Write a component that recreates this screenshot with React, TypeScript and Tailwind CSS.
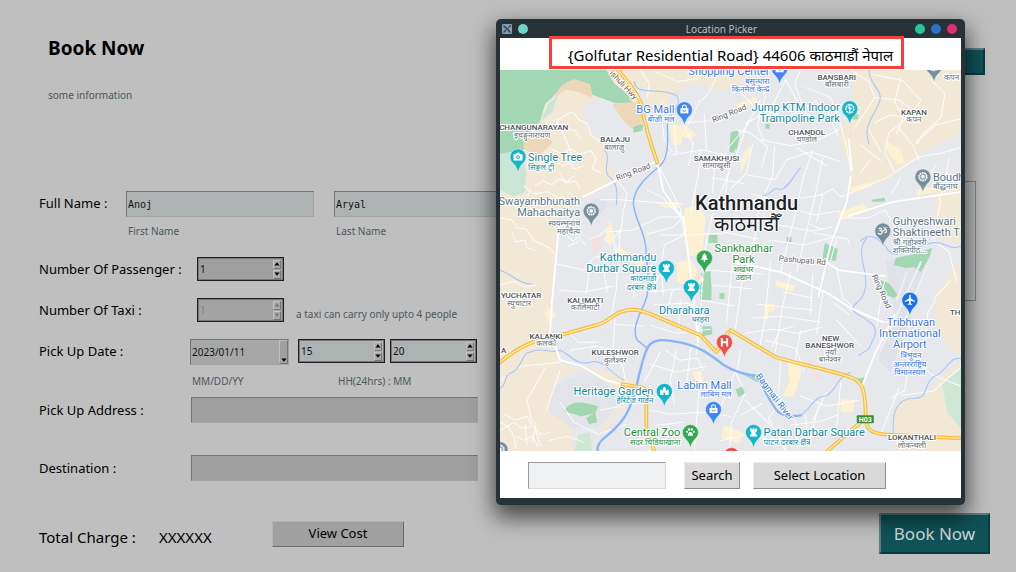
import type { ReactNode } from "react";

const UI = "font-['Noto_Sans','Open_Sans',sans-serif]";

/* ---------- form controls ---------- */

const sunken = "border border-t-[#747676] border-l-[#747676] border-b-[#a3a3a3] border-r-[#a3a3a3] outline-none";

function Arrow({ up = false }: { up?: boolean }) {
  return (
    <svg viewBox="0 0 6 4" className="h-1 w-1.5" fill="currentColor">
      <path d={up ? "M3 0.2 5.6 3.4H0.4Z" : "M3 3.8 0.4 0.6H5.6Z"} />
    </svg>
  );
}

function Spin({ label, value, tone, disabled = false }: { label: string; value: string; tone: string; disabled?: boolean }) {
  const btn =
    "flex h-[9px] w-2 items-center justify-center border border-t-[#c4c4c4] border-l-[#c4c4c4] border-b-[#777] border-r-[#777] bg-[#a9a9a9]";
  return (
    <div className={`flex h-6 w-[87px] items-center border border-[#1d1f20] pr-0.5 pl-px inset-shadow-[0_0_0_1px_#777] ${tone}`}>
      <input
        aria-label={label}
        defaultValue={value}
        disabled={disabled}
        className={`min-w-0 flex-1 bg-transparent pl-px text-[10px] outline-none ${disabled ? "text-[#7f8182]" : "text-[#111]"}`}
      />
      <div className={`flex flex-col gap-px ${disabled ? "text-[#7b7b7b]" : "text-black"}`}>
        <button type="button" aria-label={`${label} up`} disabled={disabled} className={btn}>
          <Arrow up />
        </button>
        <button type="button" aria-label={`${label} down`} disabled={disabled} className={btn}>
          <Arrow />
        </button>
      </div>
    </div>
  );
}

function RowLabel({ htmlFor, className, children }: { htmlFor?: string; className: string; children: ReactNode }) {
  return (
    <label htmlFor={htmlFor} className={`shrink-0 text-[13px] leading-6 whitespace-nowrap text-black ${className}`}>
      {children}
    </label>
  );
}

function BookingForm() {
  const hint = "text-[10px] leading-4 text-[#4b585d]";
  const nameInput = `h-[26px] w-[188px] bg-[#aeb2b2] px-px font-['DejaVu_Sans_Mono',monospace] text-[10px] text-[#111] ${sunken}`;
  return (
    <form className="flex w-[490px] flex-col">
      <div className="flex items-start">
        <RowLabel htmlFor="first" className="w-[87px]">Full Name :</RowLabel>
        <div className="flex gap-5">
          <div className="flex flex-col gap-[6px]">
            <input id="first" defaultValue="Anoj" className={nameInput} />
            <label htmlFor="first" className={`px-0.5 ${hint}`}>First Name</label>
          </div>
          <div className="flex flex-col gap-[6px]">
            <input id="last" defaultValue="Aryal" className={nameInput} />
            <label htmlFor="last" className={`px-0.5 ${hint}`}>Last Name</label>
          </div>
        </div>
      </div>
      <div className="mt-[18px] flex items-center">
        <RowLabel className="w-[158px]">Number Of Passenger :</RowLabel>
        <Spin label="Number Of Passenger" value="1" tone="bg-[#9f9f9f]" />
      </div>
      <div className="mt-[17px] flex items-center">
        <RowLabel className="w-[158px]">Number Of Taxi :</RowLabel>
        <Spin label="Number Of Taxi" value="1" tone="bg-[#a3a3a3]" disabled />
        <span className={`pt-2 pl-3 ${hint}`}>a taxi can carry only upto 4 people</span>
      </div>
      <div className="mt-[17px] flex items-start">
        <RowLabel htmlFor="date" className="w-[151px]">Pick Up Date :</RowLabel>
        <div className="flex flex-col gap-2">
          <div className={`relative flex h-[26px] w-[99px] bg-[#a6a8a8] ${sunken}`}>
            <select id="date" className="w-full appearance-none pl-px text-[10px] text-[#111] outline-none">
              <option>2023/01/11</option>
            </select>
            <span className="pointer-events-none absolute inset-y-0 right-0 flex w-[9px] items-end justify-center border border-t-[#bdbdbd] border-l-[#bdbdbd] border-r-[#777] border-b-[#777] bg-[#a0a0a0] pb-px">
              <Arrow />
            </span>
          </div>
          <span className={`px-0.5 ${hint}`}>MM/DD/YY</span>
        </div>
        <div className="flex flex-col gap-[10px] pl-[9px]">
          <div className="flex gap-[5px]">
            <Spin label="Hours" value="15" tone="bg-[#aeb2b2]" />
            <Spin label="Minutes" value="20" tone="bg-[#aeb2b2]" />
          </div>
          <span className={`pl-10 ${hint}`}>HH(24hrs) : MM</span>
        </div>
      </div>
      <div className="mt-2 flex items-center">
        <RowLabel htmlFor="pickup" className="w-[152px]">Pick Up Address :</RowLabel>
        <input id="pickup" className={`h-[26px] w-[287px] bg-[#9f9f9f] px-1 text-[10px] ${sunken}`} />
      </div>
      <div className="mt-8 flex items-center">
        <RowLabel htmlFor="destination" className="w-[152px]">Destination :</RowLabel>
        <input id="destination" className={`h-[26px] w-[287px] bg-[#9f9f9f] px-1 text-[10px] ${sunken}`} />
      </div>
    </form>
  );
}

/* ---------- map ---------- */

type Icon = "bag" | "star" | "camera" | "temple" | "fort" | "tree" | "plane" | "paw" | "h" | "om" | "wheel";

function Glyph({ icon }: { icon: Icon }) {
  switch (icon) {
    case "bag":
      return (
        <>
          <path d="M-4-1.5h8v5.200h-8z" fill="#fff" />
          <path d="M-1.9-1.5v-1.200a1.9 1.9 0 0 1 3.8 0v1.200" fill="none" stroke="#fff" strokeWidth="1.100" />
          <path d="M-1.500 .3a1.500 1.500 0 0 0 3 0" fill="none" stroke="#4285f4" strokeWidth=".9" />
        </>
      );
    case "camera":
      return (
        <>
          <path d="M-4.500-2.600h2.300l.8-1.300h2.800l.8 1.300h2.300v6.200h-9z" fill="#fff" />
          <circle cy="0.4" r="1.8" fill="#12b5cb" />
          <circle cy="0.4" r=".8" fill="#fff" />
        </>
      );
    case "temple":
      return (
        <>
          <path d="M-4.300 3.800v-5.400h1.600v1h1v-2.200h.9V-4.600h1.600v1.400h.9V-.6h1v-1h1.600v5.400z" fill="#fff" />
          <path d="M-.9 3.800V1.400h1.800v2.400z" fill="#12b5cb" />
        </>
      );
    case "fort":
      return <path d="M-3.4-4h1.5v1.200h1.1V-4H.8v1.200h1.1V-4h1.5v2.800L2-.2l.4 2.400h1.200v1.800h-7.200V2.200h1.200L-2-.2l-1.400-1z" fill="#fff" />;
    case "tree":
      return <path d="M0-5 2.700-1.400H1.600L3.500 1.800H.7v2.200H-.7V1.800h-2.800L-1.600-1.400h-1.100z" fill="#fff" />;
    case "plane":
      return <path d="M0-5.200c.6 0 .8.7.8 1.200v2.200L5 .8v1.100L.8.700v2.400l1.300 1v.8L0 4.300l-2.100.6v-.8l1.300-1V.7L-5 1.900V.8l4.200-2.600V-4c0-.5.2-1.200.8-1.200z" fill="#fff" />;
    case "paw":
      return (
        <g fill="#fff">
          <path d="M0-.4c1.600 0 3 2 2.600 3.200C2.200 4 .8 3.200 0 3.200S-2.200 4-2.600 2.800C-3 1.600-1.600-.4 0-.4z" />
          <circle cx="-3.500" cy="-.6" r="1.100" />
          <circle cx="3.500" cy="-.6" r="1.100" />
          <circle cx="-1.400" cy="-2.900" r="1.200" />
          <circle cx="1.400" cy="-2.900" r="1.200" />
        </g>
      );
    case "h":
      return <path d="M-2.700-4.200v8.400M2.700-4.200v8.400M-2.700 0h5.400" stroke="#fff" strokeWidth="1.900" />;
    case "om":
      return <path d="M-4-2.200c2-1.800 4 .6 1.400 1.900 3.200.2 2.200 3.700-.4 3.500-.9 0-1.500-.5-1.700-1.200M-.6 0c1.600.8 1.700-1.800 3.300-1.300 1.700.5 1.200 3.400-1 2.800M.5-3.500c.9 1.100 2.300 1.100 3.100 0" fill="none" stroke="#fff" strokeWidth="1.100" />;
    case "star":
      return (
        <g fill="none" stroke="#fff">
          <circle r="4" strokeWidth="1.600" strokeDasharray="2.100 .6" />
          <path d="M0-3V4.500M0 0-2-1.800M0 1.200l2-2" strokeWidth="1.100" />
        </g>
      );
    default:
      return (
        <g fill="none" stroke="#fff">
          <circle r="3.900" strokeWidth="1.600" strokeDasharray="1.800 .6" />
          <circle r="1.200" strokeWidth="1" />
          <path d="M0-3.400V3.400M-3.400 0h6.800M-2.400-2.400l4.800 4.800M2.400-2.400l-4.800 4.800" strokeWidth=".5" />
        </g>
      );
  }
}

const pins: [number, number, string, Icon][] = [
  [779, 69, "#4285f4", "bag"],
  [684, 110, "#4285f4", "bag"],
  [849, 109, "#12b5cb", "star"],
  [933, 67, "#78909c", "wheel"],
  [518, 157, "#12b5cb", "camera"],
  [591, 211, "#78909c", "wheel"],
  [922, 177, "#78909c", "wheel"],
  [882, 231, "#78909c", "om"],
  [704, 258, "#34a853", "tree"],
  [666, 268, "#12b5cb", "fort"],
  [691, 287, "#12b5cb", "fort"],
  [909, 300, "#1a73e8", "plane"],
  [724, 342, "#ea5045", "h"],
  [664, 391, "#12b5cb", "temple"],
  [713, 409, "#4285f4", "bag"],
  [690, 432, "#34a853", "paw"],
  [753, 432, "#12b5cb", "fort"],
  [731, 455, "#ea5045", "h"],
  [500, 449, "#78909c", "wheel"],
];

type Anchor = "start" | "middle" | "end";
type Label = [string, number, number, Anchor];

const teal: Label[] = [
  ["Jump KTM Indoor", 839, 111, "end"],
  ["Trampoline Park", 839, 122, "end"],
  ["Single Tree", 528, 161, "start"],
  ["Kathmandu", 656, 261, "end"],
  ["Durbar Square", 656, 272, "end"],
  ["Dharahara", 709, 314, "end"],
  ["Heritage Garden", 653, 395, "end"],
  ["Patan Darbar Square", 763, 436, "start"],
];
const tealSmall: Label[] = [
  ["सिङ्गल ट्री", 528, 170, "start"],
  ["काठमाडौं", 656, 281, "end"],
  ["दरबार क्षेत्र", 656, 290, "end"],
  ["धरहरा", 709, 322, "end"],
  ["हेरिटेज गार्डेन", 653, 403, "end"],
  ["पाटन दरबार क्षेत्र", 763, 445, "start"],
];
const blue: Label[] = [
  ["Shopping Center", 769, 75, "end"],
  ["BG Mall", 674, 113, "end"],
  ["Tribhuvan", 910, 326, "middle"],
  ["International", 909, 337, "middle"],
  ["Airport", 909, 348, "middle"],
  ["Labim Mall", 731, 389, "end"],
];
const blueSmall: Label[] = [
  ["बसुन्धारा", 769, 84, "end"],
  ["किनमेल केन्द्र", 769, 92, "end"],
  ["बीजी मल", 674, 122, "end"],
  ["त्रिभुवन", 910, 358, "middle"],
  ["अन्तरराष्ट्रिय", 909, 367, "middle"],
  ["विमानस्थल", 909, 375, "middle"],
  ["लाबिम मल", 731, 397, "end"],
];
const slate: Label[] = [
  ["Swayambhunath", 580, 205, "end"],
  ["Mahachaitya", 580, 216, "end"],
  ["Boudh", 932, 181, "start"],
  ["Guhyeshwari", 892, 225, "start"],
  ["Shaktineeth T", 892, 236, "start"],
];
const slateSmall: Label[] = [
  ["स्वयम्भूनाथ", 580, 226, "end"],
  ["महाचैत्य", 580, 234, "end"],
  ["बौद्धनाथ", 932, 189, "start"],
  ["श्री गुह्येश्वरी", 892, 245, "start"],
  ["शक्तिपीठ...", 892, 253, "start"],
  ["कपन", 943, 80, "start"],
];
const green: Label[] = [
  ["Sankhadhar", 743, 252, "middle"],
  ["Park", 743, 263, "middle"],
  ["Central Zoo", 680, 436, "end"],
];
const greenSmall: Label[] = [
  ["शंखधर", 743, 272, "middle"],
  ["उद्यान", 743, 280, "middle"],
  ["सदर चिडियाखाना", 680, 445, "end"],
];
const places: Label[] = [
  ["CHANGUNARAYAN", 568, 130, "end"],
  ["BALAJU", 615, 142, "middle"],
  ["BANSBARI", 836, 80, "middle"],
  ["KAPAN", 913, 115, "middle"],
  ["CHANDOL", 806, 135, "middle"],
  ["SAMAKHUSI", 716, 161, "middle"],
  ["YUCHATAR", 501, 298, "start"],
  ["KALIMATI", 585, 303, "middle"],
  ["KALANKI", 546, 339, "middle"],
  ["KULESHWOR", 615, 355, "middle"],
  ["NEW", 830, 341, "middle"],
  ["BANESHWOR", 829, 348, "middle"],
  ["LOKANTHALI", 911, 440, "middle"],
  ["TH.", 949, 315, "start"],
  ["A", 501, 353, "start"],
  ["DANDA", 549, 457, "middle"],
];
const placesSmall: Label[] = [
  ["इचङ्गुनारायण", 532, 138, "middle"],
  ["बालाजु", 614, 150, "middle"],
  ["बाँसबारी", 836, 87, "middle"],
  ["कपन", 913, 122, "middle"],
  ["चण्डोल", 806, 142, "middle"],
  ["सामाखुसी", 716, 168, "middle"],
  ["स्युचाटार", 519, 306, "middle"],
  ["कालिमाटी", 585, 310, "middle"],
  ["कलंकी", 546, 346, "middle"],
  ["कुलेश्वर", 615, 363, "middle"],
  ["नयाँ", 830, 355, "middle"],
  ["बानेश्वर", 829, 362, "middle"],
  ["लोकन्थली", 911, 448, "middle"],
];

function Labels({ items, className }: { items: Label[]; className: string }) {
  return (
    <g className={className}>
      {items.map(([text, x, y, anchor]) => (
        <text key={`${x}-${y}`} x={x} y={y} textAnchor={anchor}>
          {text}
        </text>
      ))}
    </g>
  );
}

const greenAreas = [
  "M730 133l7-3 2 8-4 16-6-2z",
  "M708 235h9v8h-9z",
  "M700 273l10-2 1 22-10 3z",
  "M699 285h12v15h-11z",
  "M702 326h9l1 8-10 2z",
  "M719 293h5v6h-5z",
  "M824 243l13 6-2 12-13-2z",
  "M786 237h5v5h-5z",
  "M871 200l13-2v4h-13z",
  "M895 258l15-3 21-7-2 8-9 16-7-5-8 1-12-3z",
  "M880 280l8 3 9 12-4 3-12-5z",
  "M564 411c4-8 12-10 22-8l12 3-3 7-14 3z",
  "M586 418l9-6 2 10-8 2z",
  "M735 389l8-3 3 6-8 5z",
  "M857 378l8-1-4 9z",
  "M740 373l20 1 5 11-12-5z",
  "M765 124h4v5h-4z",
  "M852 113l6 2-1 5-7-1z",
  "M633 127l10-3-1 7-9 2z",
];

const yellowAreas = [
  "M684 208l15-2 6 12-3 36-12 2-6-14z",
  "M676 262l14-2 14 20-10 8-17-6z",
  "M668 125h16l12 10-6 4-8-2-1 8h-9z",
  "M656 203l20-1 3 6-14 0z",
  "M604 240l6-20 4 16 -4 10z",
  "M616 246l28 16-3 4-26-8z",
  "M848 188l22-6 1 4-20 8z",
  "M838 212l24-8 8 6-30 10z",
  "M787 362l14 2-1 12-7 20-10 0 6-16z",
  "M660 100l8 6-2 8-6-2z",
  "M735 105l20-8 2 4-18 8z",
  "M884 140l16 10 4 14-8 0-10-14z",
  "M740 160l9-14 3 3-12 26z",
  "M915 190l22-4 8 4-28 6z",
  "M775 280l20 6-4 6-16-6z",
  "M692 372l8-2 4 14-8 0z",
  "M840 398l14 2-2 12-12 0z",
  "M764 304l10 0 0 6-6 2-2 12z",
  "M900 340l10 4-3 14-9-3z",
  "M724 425l20 8-6 10-18-6z",
  "M544 314l6-6 6 8-8 6z",
];

const minorRoads = [
  "M500 205l10-4 6 6 12-3 5 8 10 1 4 7 9 2 3 6",
  "M500 218l12 2 5 8 9 1 8 12 14 6 6 6",
  "M512 232l4 10 9-2 2 8 8 2",
  "M535 186l8-5 9 4 6-6 9 3 7-6",
  "M548 165l8-4 6 5 8-3 4 6 9-2",
  "M552 150l10 4 8-5 9 5 12-3",
  "M554 134l4-14 14-8 7 8 8 4 4 12 10 6",
  "M556 120l10 20 6 16 10 4M565 128l10 3 5 8",
  "M560 175l6 8 9-2 5 8M590 150l6 9-4 10 9 4",
  "M530 190l-3 8 5 4M556 200l7-4 3 6M524 186l10 8 14-2 10 6",
  "M565 235l8 6 6-4 6 8M568 246l10-4",
  "M640 70l9 14-2 14M655 72l22 10 20-3 8-10",
  "M700 100l-15 30 8 14M720 70l-12 24-6 6",
  "M684 123l28-2 24-12M704 115l2 34",
  "M657 163l10 20 13 26 3 25",
  "M617 180l10 14-4 18-2 17-8 10 4 20",
  "M605 232l28-2 26-13 24 0",
  "M600 200l20 0 26 2 36 2",
  "M607 228l-8 8-10 3M615 255l-20 2-10 10",
  "M647 190l16 8 16 18M670 152l-14 14",
  "M683 217l-10 10-26 7",
  "M684 235l-20 10-3 20 2 30",
  "M660 110l4 30 8 12M674 125l2 30M672 155l30-5 26 6",
  "M693 144l-5 22M700 150l-2 24-8 40",
  "M714 165l-2 30M728 172l-4 28M712 178l32 6",
  "M735 150l-8 26-15 38-8 38-4 60-4 42",
  "M748 120l-12 35M760 100l-13 25-20 24",
  "M735 88l20 20 32 10 16-10",
  "M755 72l10 24-8 30 6 14",
  "M785 80l-15 30-25 14M785 80l15 28 12 12",
  "M800 70l-6 14 8 22",
  "M803 108l12-6 12 10 10 24",
  "M760 140l30 6 24-4 24-12",
  "M752 145l-6 28-16 16",
  "M746 175l28 5 12-20 24-8 30 10",
  "M774 146l-2 30-12 28-6 20",
  "M752 195l30 6 40-6",
  "M812 150l-10 30-6 28-16 64",
  "M822 158l-8 40-18 74M796 148l30 18",
  "M735 130l14 3 18 14-6 20",
  "M783 205l30 10 26-4M777 225l34 6 20-4",
  "M768 240l36 5 28-8",
  "M757 228l-15 50-7 50",
  "M719 231l38 8M702 270l32 2 28 2M712 285l40 4M700 300l34 6",
  "M732 262l-6 60M770 262l-6 60-6 30M790 272l-8 34-8 50",
  "M783 292l28 6M756 304l56 6M752 318l28-2 40 6",
  "M745 333l28-4 24 4 24-6",
  "M812 274l-2 40M822 292l-6 42M833 303l16 12",
  "M660 235l30 0 36-2M668 262l-16 26",
  "M650 292l26-3 26 2M653 305l34-2 16 6",
  "M672 290l-6 25M680 300l-2 30M650 325l26 8 34-4",
  "M557 264l26 6 20-4 18 6 30-4",
  "M620 230l-4 60-6 32M560 290l24 2 30-6",
  "M590 265l-4 28M603 268l4 24M636 268l-3 30",
  "M615 312l-2 36 10 20 3 18M613 324l30 2",
  "M566 330l12 12 20 0M570 350l26-4 18 4",
  "M500 285l14-4 10 6 12-2",
  "M500 380l20-14 22-2 18-2",
  "M545 368l-18 32 4 18 10 28M560 370l-14 40",
  "M500 430l14-8 8 6 12-2 6 8 10-2",
  "M505 414l10 6 12-4 4 8M516 436l8 4 8-4 6 10",
  "M500 422l8 4 6 10 2 12M525 424l2 20M536 422l-4 20",
  "M560 402l14 20 24 12 28-10",
  "M548 440l20-4 16 6M600 410l20-4",
  "M660 352l-16 30M665 350l14 10 18-2 6 12",
  "M650 364l26 8 30-6M676 350l-6 30 4 24M690 348l-4 40",
  "M650 410l20 4 30-2 30 4M655 425l28-3",
  "M700 372l-4 50-2 29M735 370l-16 40",
  "M735 372l10 20-14 30-2 29M720 440l30-6 20 6",
  "M740 415l22-12M745 400l30 30 10 21",
  "M780 400l-12 18 18 32M790 425l30-4 16-6",
  "M795 420l2 28M805 415l2 30M818 405l-8 32",
  "M800 396l26 10 32-6M826 392l-14 28M840 382l-4 44",
  "M780 362l-2 28M771 348l8-18 14-4M800 330l-6 34",
  "M740 350l-4 24M765 340l30 8 8 22",
  "M805 88l25 10 8 20 8 30 4 24",
  "M850 70l18 12 6 16-12 18-10 14",
  "M872 75l30 6 18 20-12 16-20 16-4 20 10 20",
  "M874 98l24 2 16 12M900 78l-6 24 8 16-6 16",
  "M930 80l14 14-4 24-18 16-6 10",
  "M915 143l20-18 25-6M912 120l-22-5-16 8",
  "M898 128l14 18 6 14M860 145l20 16M868 130l12 22",
  "M820 195l12-6 8 8 14-6 30-12 34-22 24-4 20-6",
  "M838 218l30 0 16-8 6 10M860 172l10-12",
  "M900 178l-10 16M935 165l-12 20M948 158l-4 26-6 16",
  "M940 200l-8 40 16 12 8 30",
  "M810 224l12 6M822 196l-6 26",
  "M813 233l34 6 2 6M836 238l-6 22",
  "M836 268l6 30 12 10M850 310l32 12 22 0",
  "M884 280l-4 20-4 26",
  "M898 388l-12 30-6 16M896 340l34 34 30 12",
  "M912 330l-8 60-14 8M935 300l-8 12-4 38",
  "M950 280l-18 20M836 320l24 26",
  "M900 395l32-4 28-24",
];

const arterials = [
  "M583 197l36-18 38-18M657 163l6 28 18 26M683 217l10 80 5 45",
  "M552 300l-2 32 10 28 22 6 24 14 16 4M558 235l-6 66",
  "M850 177l-4 25-16 42-12 52",
  "M848 140l3 30",
  "M735 262l45 10 45 20 25 16 32 14",
  "M818 258l20 12 46 6",
  "M848 216l44-14 68-10",
  "M862 384l12-30 20-40",
];

const highways = [
  "M612 64C628 82 636 92 641 104C644 122 648 138 657 163",
  "M500 362C522 344 535 340 560 335L596 325C608 322 612 315 620 312S636 308 650 314L700 335L716 352L728 332",
  "M730 330L775 357C800 364 830 370 850 377C862 381 865 390 865 420C866 430 872 433 884 434L960 438",
  "M622 384L641 387Q646 388 646 393V430L655 453",
  "M824 453L862 420",
];

const rivers = [
  { d: "M667 125C668 148 667 158 660 166C642 180 634 190 633 203C634 220 646 232 646 255C648 280 650 290 644 304C636 320 632 332 637 340L647 348", w: 1.4 },
  { d: "M647 348C640 362 639 380 632 400C626 418 618 426 606 436C598 442 597 446 597 453", w: 2.4 },
  { d: "M647 348C652 338 664 339 678 342C700 346 712 356 722 364C734 372 746 374 756 376C764 388 770 404 778 412C784 416 792 416 800 415", w: 2.4 },
];
const streams = [
  "M800 415C812 406 814 396 824 396C836 392 834 378 850 372",
  "M860 241C868 232 878 238 886 248C893 262 910 248 930 243C944 240 948 252 960 246",
  "M866 238C854 252 866 266 865 285C862 306 852 300 852 310C862 320 880 322 873 338C866 352 872 346 858 355",
  "M500 388C508 384 502 376 512 372S522 352 530 352C542 346 548 354 560 350C570 354 576 366 590 362S610 374 624 380",
  "M634 82C636 98 660 86 676 96C684 106 668 112 667 125",
  "M800 168C792 176 790 186 780 190C770 186 774 194 762 196",
  "M500 270C514 276 520 284 532 284",
  "M893 440C890 410 896 398 914 398C930 398 920 380 938 374C952 360 950 358 960 358",
  "M868 70C868 86 884 90 878 104S862 126 868 144",
  "M604 150C612 158 602 168 608 176C616 182 618 190 616 205",
];

function CityMap() {
  const poi = "text-[11px]";
  const small = "font-['Noto_Sans',sans-serif] text-[8px]";
  return (
    <svg
      role="img"
      aria-label="Map of Kathmandu"
      viewBox="500 70 460 381"
      preserveAspectRatio="xMidYMid slice"
      className="block h-[381px] w-full bg-[#e8eaed] font-['Roboto',sans-serif]"
    >
      <rect x="500" y="70" width="460" height="381" fill="#e6e8ec" />
      <g fill="#f1e8d6">
        <path d="M500 70H640V104L632 130 612 98 600 97 581 108 588 130 603 144 608 160 616 179 583 197 564 215 557 240 551 300 552 340 560 362 582 370 566 374 552 386 549 412 570 424 573 451H500Z" />
        <path d="M636 70H748L738 84 722 92 690 84 668 98 664 112 648 104Z" />
        <path d="M848 70H960V133L918 154 903 166 885 181 846 194 849 168 838 140 845 118 852 100Z" />
        <path d="M932 192L960 186V245L940 240Z" />
        <path d="M936 292L950 272 960 262V356L945 345 933 320Z" />
        <path d="M893 451V410L902 398 925 396 940 376 960 360V451Z" />
        <path d="M582 366L612 372 636 382 630 402 610 424 598 438 600 430 620 404 622 394 600 378Z" />
      </g>
      <g fill="#dfe2e9">
        <path d="M552 388L570 378 590 372 618 392 616 406 600 426 572 428 550 412Z" opacity=".7" />
        <path d="M885 262L918 250 925 268 905 330 890 372 878 360 893 310Z" />
        <path d="M594 200l10-2 4 8-8 8-8-4z" />
      </g>
      <g fill="#a3d7b4">
        <path d="M500 70H606L614 84 632 98 631 104 614 103 592 95 590 85 575 80 562 86 552 98 545 104 540 122 530 130 524 150 500 155Z" />
      </g>
      <path d="M548 104L558 96 552 112 541 122Z" fill="#c9e6d4" />
      <path d="M500 154L522 150 526 172 525 192 514 197 500 190Z" fill="#c9e6d4" />
      <path d="M554 98C560 86 568 80 576 80L590 85 592 98 578 92 566 90Z" fill="#ecd8b8" />
      <path d="M525 136L548 126 552 144 538 157 523 148Z" fill="#ecd8b8" />
      <path d="M612 104L638 102 643 122 633 130 622 120Z" fill="#ecd8b8" />
      <path d="M941 382L960 368V428L946 412Z" fill="#cfe8d6" />
      <path d="M578 434L590 432 592 451H574Z" fill="#cfe8d6" />
      <g fill="#a3d7b4">
        {greenAreas.map((d) => (
          <path key={d} d={d} />
        ))}
      </g>
      <g fill="#fcf1d0">
        {yellowAreas.map((d) => (
          <path key={d} d={d} />
        ))}
      </g>
      <g fill="#f5dedd">
        <path d="M591 235h9l1 14-8 4z" />
        <path d="M738 142l6-3 2 5-5 3z" />
        <path d="M813 372l8 2-2 5-6-2z" />
        <path d="M697 270l4 3-3 8-4-2z" />
      </g>
      <g fill="none" strokeLinejoin="round" strokeLinecap="round">
        <g stroke="#fff" strokeWidth="1" opacity=".9">
          {minorRoads.map((d) => (
            <path key={d} d={d} />
          ))}
        </g>
        <g stroke="#a4c4f7" strokeWidth="1">
          {streams.map((d) => (
            <path key={d} d={d} />
          ))}
        </g>
        <g stroke="#8ab4f8">
          {rivers.map(({ d, w }) => (
            <path key={d} d={d} strokeWidth={w} />
          ))}
        </g>
        <g stroke="#fff" strokeWidth="1.800">
          {arterials.map((d) => (
            <path key={d} d={d} />
          ))}
        </g>
        <g stroke="#f8bd3a" strokeWidth="3.800">
          {highways.map((d) => (
            <path key={d} d={d} />
          ))}
        </g>
        <g stroke="#fdeab0" strokeWidth="1.400">
          {highways.map((d) => (
            <path key={d} d={d} />
          ))}
        </g>
        <g stroke="#eef0f4" strokeWidth="2">
          <path d="M920 262L880 350M906 272L896 300M926 266L904 320" />
        </g>
      </g>
      <rect x="856" y="415" width="17" height="8" rx="1" fill="#3c8a2e" />
      <text x="864.5" y="422" textAnchor="middle" className="fill-white text-[7px] font-bold">
        H03
      </text>
      {pins.map(([x, y, color, icon]) => (
        <g key={`${x}-${y}`} transform={`translate(${x} ${y})`}>
          <path d="M0 15.500C-1 11-2.500 9-4.800 6.600A8 8 0 1 1 4.800 6.600C2.500 9 1 11 0 15.500Z" fill={color} stroke="#fff" strokeWidth=".4" />
          <Glyph icon={icon} />
        </g>
      ))}
      <g stroke="#fff" strokeWidth="2" strokeLinejoin="round" className="[paint-order:stroke]">
        <g className="fill-[#5f6368] text-[8px]">
          <text transform="translate(713 123) rotate(-22)">Ring Road</text>
          <text transform="translate(617 181) rotate(-21)">Ring Road</text>
          <text transform="translate(778 261) rotate(5)">Pashupati Rd</text>
          <text transform="translate(871 276) rotate(66)">Ring Road</text>
        </g>
        <text transform="translate(609 74) rotate(47)" className="fill-[#7a5a3a] text-[8px]">
          ishuli Hwy
        </text>
        <text transform="translate(755 376) rotate(53)" className="fill-[#2f74d0] text-[9px]">
          Bagmati River
        </text>
        <Labels items={places} className="fill-[#4d5156] text-[8px] font-medium" />
        <Labels items={placesSmall} className="fill-[#6b6f74] font-['Noto_Sans',sans-serif] text-[8px]" />
        <Labels items={teal} className={`fill-[#12899a] ${poi}`} />
        <Labels items={tealSmall} className={`fill-[#12899a] ${small}`} />
        <Labels items={blue} className={`fill-[#3b78e7] ${poi}`} />
        <Labels items={blueSmall} className={`fill-[#3b78e7] ${small}`} />
        <Labels items={slate} className={`fill-[#5b7685] ${poi}`} />
        <Labels items={slateSmall} className={`fill-[#5b7685] ${small}`} />
        <Labels items={green} className={`fill-[#1e8e3e] ${poi}`} />
        <Labels items={greenSmall} className={`fill-[#1e8e3e] ${small}`} />
        <text x="746" y="210" textAnchor="middle" className="fill-[#202124] text-[20px] font-medium">
          Kathmandu
        </text>
        <text x="746" y="231" textAnchor="middle" className="fill-[#202124] font-['Noto_Sans',sans-serif] text-[20px]">
          काठमाडौँ
        </text>
      </g>
    </svg>
  );
}

/* ---------- location picker window ---------- */

const raised = "border border-t-[#ececec] border-l-[#ececec] border-b-[#8d8d8d] border-r-[#8d8d8d] bg-[#d9d9d9]";

function LocationPicker() {
  return (
    <section
      role="dialog"
      aria-labelledby="picker-title"
      className="absolute top-[19px] right-[51px] flex w-[469px] flex-col rounded-[5px] bg-[#263238] px-1 pb-[7px] shadow-[0_10px_22px_2px_rgba(0,0,0,0.65)]"
    >
      <header className="flex h-[19px] items-center px-0.5">
        <svg viewBox="0 0 10 10" className="size-2.5">
          <rect width="10" height="10" rx="1" fill="#7f9dbb" />
          <path d="M1.500 1.500 8.500 8.500M8.500 1.500 6 4.500M4 6 1.500 8.500" stroke="#2c3a46" strokeWidth="1.300" />
          <circle cx="7.500" cy="4" r="1" fill="#c98a6a" />
        </svg>
        <span className="ml-1.5 size-2.5 rounded-full bg-[#6ed6c8]" />
        <h2 id="picker-title" className="flex-1 text-center text-[10px] leading-4 text-[#b4bfc4]">
          Location Picker
        </h2>
        <div className="flex gap-1.5 pr-0.5">
          <button type="button" aria-label="Minimize" className="size-2.5 rounded-full bg-[#2bc39b]" />
          <button type="button" aria-label="Maximize" className="size-2.5 rounded-full bg-[#2f6fc4]" />
          <button type="button" aria-label="Close" className="size-2.5 rounded-full bg-[#e12d74]" />
        </div>
      </header>
      <div className="bg-white">
        <p className="relative flex h-8 items-center justify-center pt-0.5 text-[15px] whitespace-nowrap text-black">
          {"{Golfutar Residential Road} 44606 काठमाडौं नेपाल"}
          <span className="pointer-events-none absolute -top-0.5 left-[49px] h-[33px] w-[355px] border-[3px] border-[#f8403a]" />
        </p>
        <CityMap />
        <form className="flex items-center pt-[11px] pb-[9px] pl-7">
          <input aria-label="Search location" className="h-[27px] w-[138px] border border-t-[#9a9a9a] border-l-[#9a9a9a] border-b-[#dcdcdc] border-r-[#dcdcdc] bg-[#eff0f2] px-1 text-[12px] outline-none" />
          <button type="button" className={`ml-[18px] h-[27px] w-14 text-[13px] text-black ${raised}`}>
            Search
          </button>
          <button type="button" className={`ml-[13px] h-[27px] w-[133px] text-[13px] text-black ${raised}`}>
            Select Location
          </button>
        </form>
      </div>
    </section>
  );
}

export default function App() {
  const tealButton = "border-2 border-t-[#5b7f82] border-l-[#5b7f82] border-r-[#0b3a3d] border-b-[#0b3a3d] bg-[#0f5257] text-[#cfd6d6]";
  return (
    <main className={`relative flex min-h-screen flex-col overflow-hidden bg-[#bfbfbf] ${UI}`}>
      <header className="flex items-start justify-between pt-9 pr-[31px] pl-12">
        <div>
          <h1 className="text-[19px] leading-6 font-bold text-black">Book Now</h1>
          <p className="mt-[27px] text-[10px] leading-4 text-[#4b585d]">some information</p>
        </div>
        <button type="button" className={`mt-3 h-[27px] w-[90px] pl-5 text-[13px] ${tealButton}`}>
          Back
        </button>
      </header>
      <div className="flex items-start justify-between pt-[78px] pr-10 pl-[39px]">
        <div className="pt-[10px]">
          <BookingForm />
        </div>
        <textarea aria-label="Details" className="h-[120px] w-60 resize-none border border-[#858585] bg-transparent outline-none" />
      </div>
      <footer className="flex items-center pt-8 pr-[26px] pb-[18px] pl-[39px]">
        <span className="w-[120px] pt-1.5 text-[15px] leading-6">Total Charge :</span>
        <output className="w-[113px] pt-1.5 text-[15px] leading-6">XXXXXX</output>
        <button type="button" className="h-[26px] w-[132px] border border-t-[#b4b4b4] border-l-[#b4b4b4] border-r-[#6a6a6a] border-b-[#6a6a6a] bg-[#a0a0a0] text-[13px] text-black">
          View Cost
        </button>
        <button type="button" className={`ml-auto h-[41px] w-[111px] text-[17px] ${tealButton}`}>
          Book Now
        </button>
      </footer>
      <LocationPicker />
    </main>
  );
}
